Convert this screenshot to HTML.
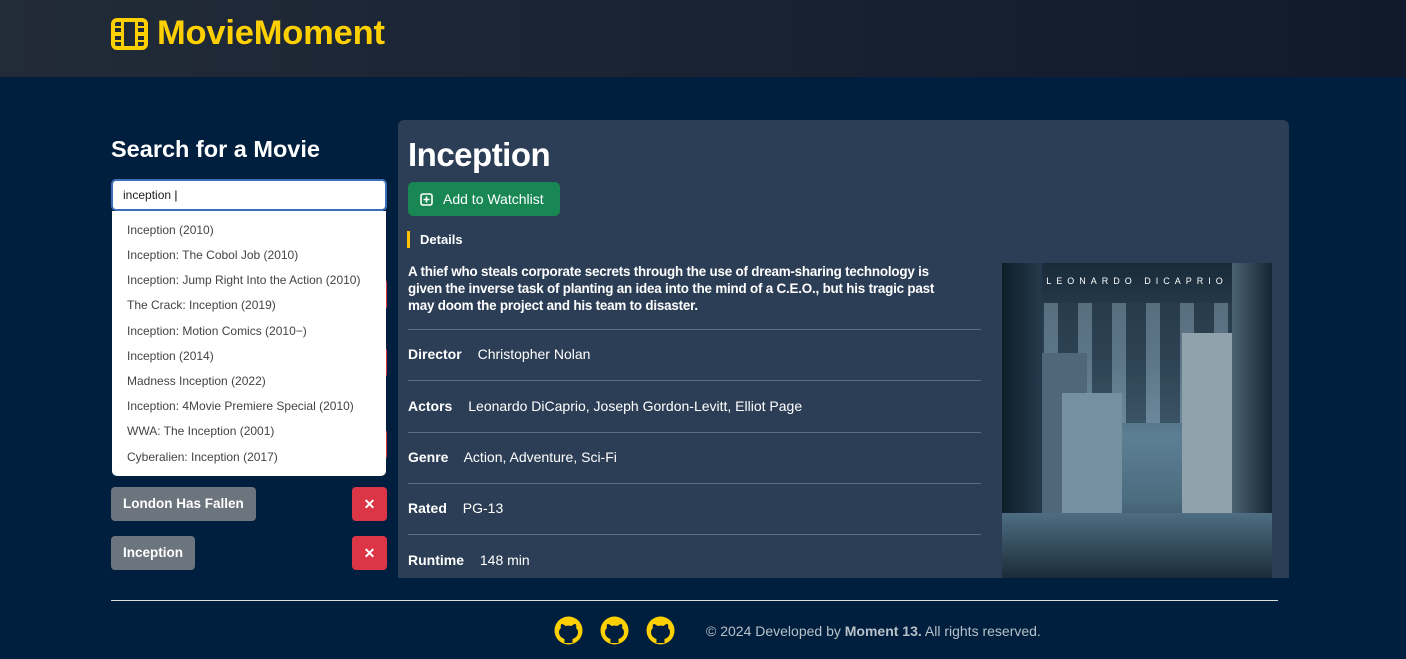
<!DOCTYPE html>
<html><head><meta charset="utf-8"><style>
*{box-sizing:border-box;margin:0;padding:0}
body{width:1406px;height:659px;overflow:hidden;background:#001f3f;font-family:"Liberation Sans",Arial,sans-serif;position:relative}
.hdr{position:absolute;left:0;top:0;width:1406px;height:77px;background:linear-gradient(90deg,#222b38,#101a2b)}
.logo{position:absolute;left:111px;top:14px;color:#ffd000;font-weight:bold;font-size:34.5px;display:flex;align-items:center;gap:9px;letter-spacing:-0.2px}
.abs{position:absolute}
h2{position:absolute;left:111px;top:136px;color:#fff;font-size:23.5px;font-weight:bold}
.inp{left:111px;top:179px;width:276px;height:32px;background:#fff;border:2px solid #3d6fb8;border-radius:5px;font-size:12px;color:#222;padding:7px 10px}
.dd{left:112px;top:211px;width:274px;height:265px;background:#fff;border-radius:0 0 5px 5px}
.dd div{position:absolute;left:15px;font-size:12px;color:#444}
.red{background:#dc3545;border-radius:4px;color:#fff;font-weight:bold;text-align:center}
.grey{background:#6c757d;border-radius:4px;color:#fff;font-size:13.5px;font-weight:bold;padding:0 12px;line-height:34px}
.panel{left:398px;top:120px;width:891px;height:458px;background:#2c3e55;border-radius:6px 6px 0 0}
.row{position:absolute;left:408px;width:573px;font-size:14px;color:#fff}
.row b{margin-right:12px}
.line{position:absolute;left:408px;width:573px;height:1px;background:#5d6d80}
</style></head><body>
<div class="hdr"></div>
<div class="logo"><svg width="37" height="32" viewBox="0 0 37 32"><rect x="2" y="2" width="33" height="28" rx="4" fill="none" stroke="#ffd000" stroke-width="4"/><rect x="10" y="2" width="3" height="28" fill="#ffd000"/><rect x="24" y="2" width="3" height="28" fill="#ffd000"/><rect x="2" y="14" width="8" height="4" fill="#ffd000"/><rect x="27" y="14" width="8" height="4" fill="#ffd000"/><rect x="2" y="8" width="8" height="2" fill="#ffd000"/><rect x="27" y="8" width="8" height="2" fill="#ffd000"/><rect x="2" y="22" width="8" height="2" fill="#ffd000"/><rect x="27" y="22" width="8" height="2" fill="#ffd000"/></svg>MovieMoment</div>
<h2>Search for a Movie</h2>
<div class="abs red" style="left:352px;top:279px;width:35px;height:31px"></div>
<div class="abs red" style="left:352px;top:347px;width:35px;height:31px"></div>
<div class="abs red" style="left:352px;top:429px;width:35px;height:31px"></div>
<div class="abs inp">inception <span style="color:#000">|</span></div>
<div class="abs dd">
<div style="top:12px">Inception (2010)</div>
<div style="top:37px">Inception: The Cobol Job (2010)</div>
<div style="top:62px">Inception: Jump Right Into the Action (2010)</div>
<div style="top:87px">The Crack: Inception (2019)</div>
<div style="top:113px">Inception: Motion Comics (2010−)</div>
<div style="top:138px">Inception (2014)</div>
<div style="top:163px">Madness Inception (2022)</div>
<div style="top:188px">Inception: 4Movie Premiere Special (2010)</div>
<div style="top:213px">WWA: The Inception (2001)</div>
<div style="top:239px">Cyberalien: Inception (2017)</div>
</div>
<div class="abs grey" style="left:111px;top:487px;height:34px">London Has Fallen</div>
<div class="abs red" style="left:352px;top:487px;width:35px;height:34px;line-height:34px;font-size:14px">✕</div>
<div class="abs grey" style="left:111px;top:536px;height:34px">Inception</div>
<div class="abs red" style="left:352px;top:536px;width:35px;height:34px;line-height:34px;font-size:14px">✕</div>
<div class="abs panel"></div>
<div class="abs" style="left:408px;top:136px;color:#fff;font-size:33px;font-weight:bold;letter-spacing:-0.5px">Inception</div>
<div class="abs" style="left:408px;top:182px;width:152px;height:34px;background:#198754;border-radius:5px;color:#fff;font-size:14px;line-height:34px;padding-left:35px">Add to Watchlist<svg style="position:absolute;left:12px;top:11px" width="13" height="13" viewBox="0 0 13 13"><rect x="1" y="1" width="11" height="11" rx="2" fill="none" stroke="#fff" stroke-width="1.6"/><path d="M6.5 3.5v6M3.5 6.5h6" stroke="#fff" stroke-width="1.6"/></svg></div>
<div class="abs" style="left:407px;top:231px;width:3px;height:17px;background:#ffc107"></div>
<div class="abs" style="left:420px;top:232px;color:#fff;font-size:13px;font-weight:bold">Details</div>
<div class="abs" style="left:408px;top:263px;width:552px;color:#fff;font-size:13.4px;font-weight:bold;line-height:17px;letter-spacing:-0.2px">A thief who steals corporate secrets through the use of dream-sharing technology is given the inverse task of planting an idea into the mind of a C.E.O., but his tragic past may doom the project and his team to disaster.</div>
<div class="line" style="top:329px"></div>
<div class="row" style="top:346px"><b>Director</b> Christopher Nolan</div>
<div class="line" style="top:380px"></div>
<div class="row" style="top:398px"><b>Actors</b> Leonardo DiCaprio, Joseph Gordon-Levitt, Elliot Page</div>
<div class="line" style="top:432px"></div>
<div class="row" style="top:449px"><b>Genre</b> Action, Adventure, Sci-Fi</div>
<div class="line" style="top:483px"></div>
<div class="row" style="top:500px"><b>Rated</b> PG-13</div>
<div class="line" style="top:534px"></div>
<div class="row" style="top:552px"><b>Runtime</b> 148 min</div>
<div class="abs" style="left:1002px;top:263px;width:270px;height:315px;overflow:hidden;background:linear-gradient(180deg,#1a2a38 0%,#2f4a5e 30%,#5d7f94 55%,#4c6d80 75%,#1d2e3a 100%)">
<div class="abs" style="left:30px;top:40px;width:200px;height:120px;background:repeating-linear-gradient(90deg,#2a3d4c 0 12px,#7a93a3 12px 26px,#2a3d4c 26px 34px);opacity:.6"></div>
<div class="abs" style="left:0;top:0;width:40px;height:315px;background:linear-gradient(90deg,#0f1d29,#243a4c)"></div>
<div class="abs" style="left:40px;top:90px;width:45px;height:200px;background:#4f6778"></div>
<div class="abs" style="left:60px;top:130px;width:60px;height:160px;background:#7590a0"></div>
<div class="abs" style="left:180px;top:70px;width:55px;height:210px;background:#90a2ac"></div>
<div class="abs" style="left:230px;top:0;width:40px;height:315px;background:linear-gradient(90deg,#4a6272,#162532)"></div>
<div class="abs" style="left:0;top:250px;width:270px;height:65px;background:linear-gradient(180deg,#4e6e82,#1b2c38)"></div>
<div class="abs" style="left:0;top:13px;width:270px;text-align:center;color:#fff;font-size:9px;letter-spacing:5px">LEONARDO DICAPRIO</div>
</div>
<div class="abs" style="left:111px;top:600px;width:1167px;height:1px;background:#ddd"></div>
<svg class="abs" style="left:554px;top:616px" width="122" height="29" viewBox="0 0 122 29">
<g id="g"><circle cx="14.5" cy="14.5" r="14" fill="#ffd000"/><path d="M10.5 27v-4c-3-1-5.5-3-5.5-7 0-2 1-3 2-4-0.5-1-0.5-3 0.5-4 1.5 0 3 1 4 2 2-0.5 4-0.5 6 0 1-1 2.5-2 4-2 1 1 1 3 0.5 4 1 1 2 2 2 4 0 4-2.5 6-5.5 7v4z" fill="#001f3f"/></g>
<use href="#g" x="46"/><use href="#g" x="92"/></svg>
<div class="abs" style="left:706px;top:623px;color:#b8c0c8;font-size:14px">© 2024 Developed by <b>Moment 13.</b> All rights reserved.</div>
</body></html>
